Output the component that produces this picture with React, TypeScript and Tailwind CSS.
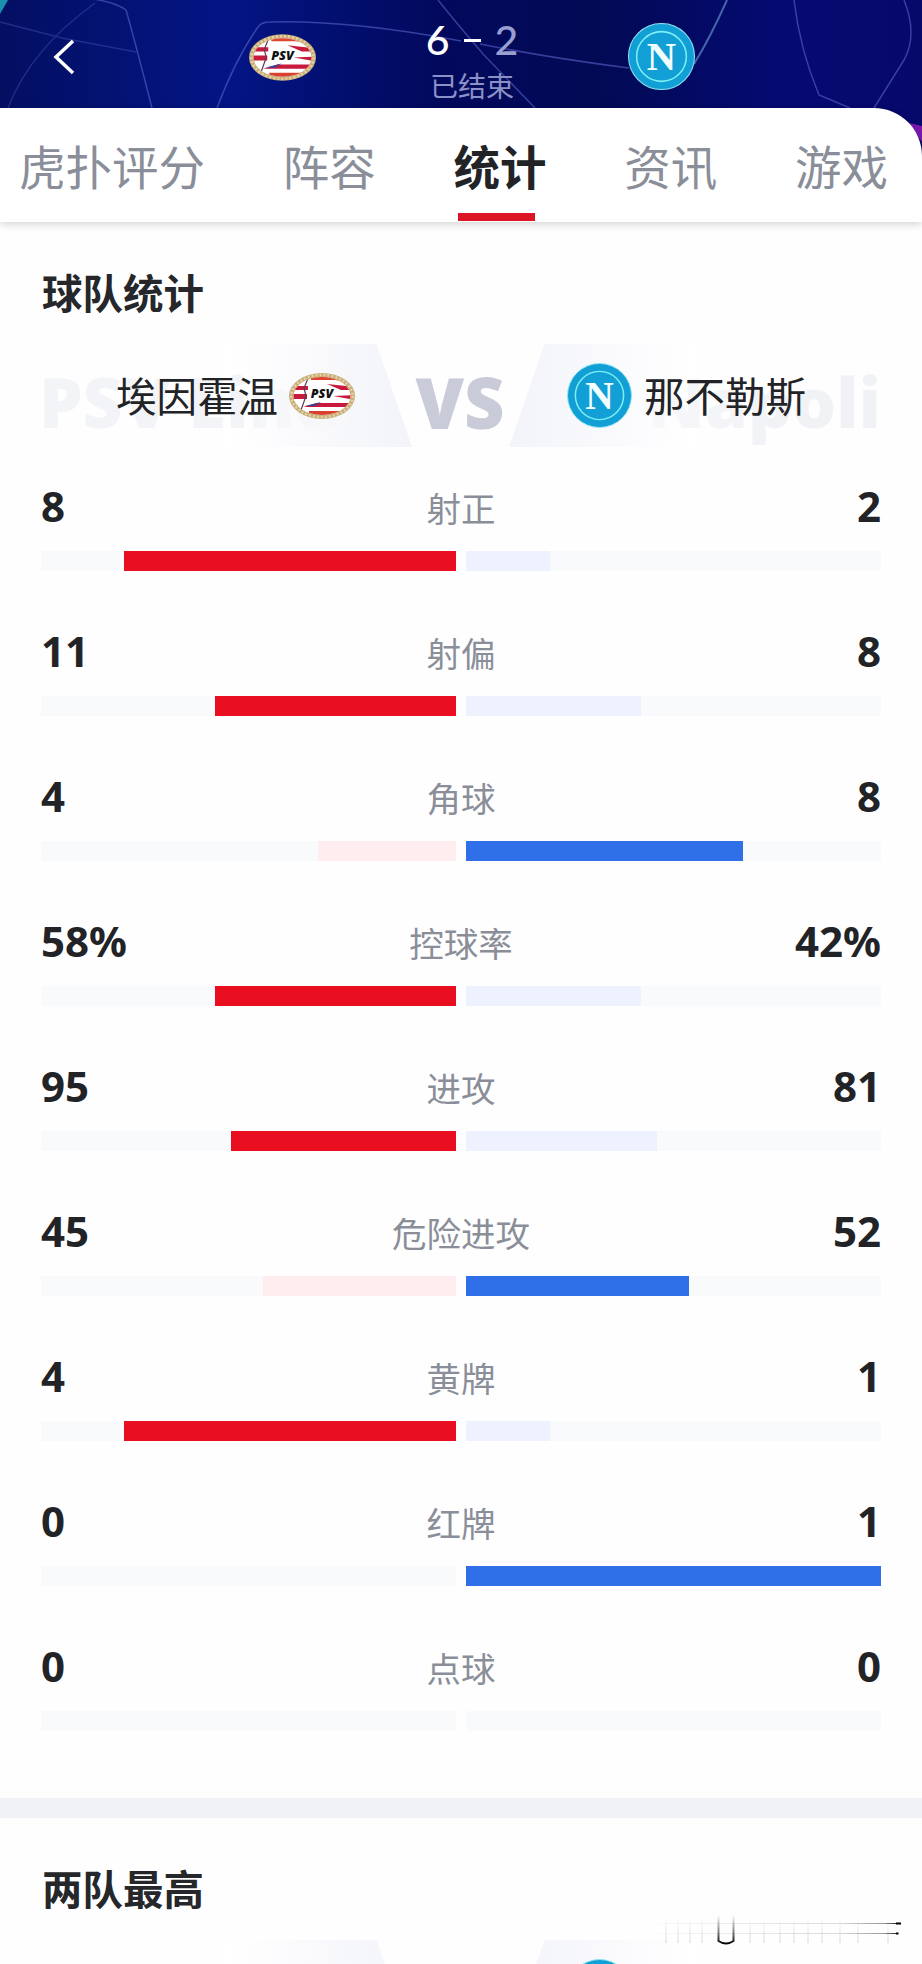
import type { ReactNode } from "react";

const cjk = "font-['Noto_Sans_CJK_SC',sans-serif]";

const tabs = ["虎扑评分", "阵容", "统计", "资讯", "游戏"];

const stats = [
  { label: "射正", home: "8", away: "2", homePct: 80, awayPct: 20.3 },
  { label: "射偏", home: "11", away: "8", homePct: 58, awayPct: 42.2 },
  { label: "角球", home: "4", away: "8", homePct: 33.3, awayPct: 66.7 },
  { label: "控球率", home: "58%", away: "42%", homePct: 58, awayPct: 42.2 },
  { label: "进攻", home: "95", away: "81", homePct: 54.3, awayPct: 46 },
  { label: "危险进攻", home: "45", away: "52", homePct: 46.6, awayPct: 53.8 },
  { label: "黄牌", home: "4", away: "1", homePct: 80, awayPct: 20.3 },
  { label: "红牌", home: "0", away: "1", homePct: 0, awayPct: 100 },
  { label: "点球", home: "0", away: "0", homePct: 0, awayPct: 0 },
];

function PsvLogo({ className }: { className?: string }) {
  return (
    <svg viewBox="0 0 66 46" className={className}>
      <defs>
        <clipPath id="psv-inner">
          <ellipse cx="33" cy="23" rx="28.5" ry="19" />
        </clipPath>
      </defs>
      <ellipse cx="33" cy="23" rx="33" ry="23" fill="#c9ad78" />
      <ellipse
        cx="33"
        cy="23"
        rx="30.7"
        ry="21"
        fill="none"
        stroke="#e3d3a8"
        strokeWidth="2.5"
        strokeDasharray="2 2"
      />
      <g clipPath="url(#psv-inner)">
        <rect width="66" height="46" fill="#fff" />
        <path d="M22 0h44v10L46 7H22z" fill="#e0452f" />
        <path d="M0 13h19v4H0zM0 21h18v5H0zM38 11l28 3v3H52z" fill="#c81a3c" />
        <path d="M66 27L44 23l22-1zM28 30h38v4H14z" fill="#c81a3c" />
        <path d="M20 38h36v8H20z" fill="#d9402f" />
        <path d="M20 3l-5 12 2 8-5 14" stroke="#5d3c55" strokeWidth="1.2" fill="none" />
        <path d="M16 33l16-4-6 4z" fill="#3b3f8f" />
      </g>
      <text
        x="33"
        y="25"
        textAnchor="middle"
        fontSize="12.5"
        fontWeight="800"
        fontStyle="italic"
        fontFamily="'Open Sans', sans-serif"
        fill="#111"
      >
        PSV
      </text>
    </svg>
  );
}

function NapoliLogo({ className }: { className?: string }) {
  return (
    <svg viewBox="0 0 66 66" className={className}>
      <circle cx="33" cy="33" r="32.5" fill="#119fd6" stroke="#8fe6f4" strokeWidth="1" />
      <circle cx="33" cy="33" r="24.5" fill="none" stroke="#7df0f5" strokeWidth="1.5" />
      <text
        x="33"
        y="46.5"
        textAnchor="middle"
        fontSize="40"
        fontWeight="700"
        fontFamily="'Liberation Serif', serif"
        fill="#f2ffff"
      >
        N
      </text>
    </svg>
  );
}

function Header() {
  return (
    <header className="relative h-[160px] overflow-hidden bg-[linear-gradient(90deg,#040f62_0%,#031585_25%,#02095c_48%,#020a55_65%,#050a72_85%,#07086a_100%)]">
      <svg
        viewBox="0 0 922 160"
        className="absolute inset-0 h-full w-full"
        fill="none"
        stroke="#5a63c8"
        strokeOpacity="0.6"
        strokeWidth="1.5"
      >
        <path d="M0 0h8L0 14z" fill="#1a8fae" stroke="none" />
        <path d="M60-4Q110-2 126 10Q132 30 152 108" />
        <path d="M95 3Q30 50 8 108M0 22L62 38 136 52" strokeOpacity="0.35" />
        <path d="M217 108Q235 60 258 27Q261 22 270 22Q350 20 461 41" />
        <path d="M438 0Q458 25 484 55L535 108M480 44Q550 58 629 68" />
        <path d="M694 64Q710 38 727 0" stroke="#6fa0d8" strokeWidth="2" />
        <path d="M794 0Q800 50 819 95L850 108M904 0Q918 35 904 60L874 108" />
        <path d="M905 122L922 126V142Z" fill="#7a18b0" stroke="none" />
      </svg>

      <div className="relative flex h-[108px] items-center">
        <button className="ml-[53px] mt-[5px]" aria-label="返回">
          <svg
            width="22"
            height="36"
            viewBox="0 0 22 36"
            fill="none"
            stroke="#fff"
            strokeWidth="3.5"
          >
            <path d="M20 2L3 18l17 16" />
          </svg>
        </button>
        <PsvLogo className="ml-[174px] mt-[6px] h-[47px] w-[67px]" />
        <div className="flex w-[312px] flex-col items-center pt-[9px]">
          <div className="flex h-[50px] items-center gap-[14px] pt-[2px] font-['Lato',sans-serif] text-[41px] leading-none font-medium text-white">
            <span>6</span>
            <span className="mt-[2px] h-[3px] w-[17px] bg-white" />
            <span className="text-[#9a9fd2]">2</span>
          </div>
          <span className={`${cjk} mt-[2px] h-[38px] text-[28px] leading-[38px] text-[#8b90c6]`}>
            已结束
          </span>
        </div>
        <NapoliLogo className="mt-[5px] size-[67px]" />
      </div>
    </header>
  );
}

function TabBar() {
  return (
    <nav
      className={`${cjk} relative -mt-[52px] flex h-[114px] items-start justify-between rounded-tr-[48px] bg-white pr-[34px] pl-[19px] text-[46.5px] leading-[68px] text-[#8a8e99] shadow-[0_2px_8px_rgba(0,0,0,0.18)]`}
    >
      {tabs.map((tab) =>
        tab === "统计" ? (
          <div key={tab} className="flex h-full flex-col items-center pt-[23px] font-bold text-[#222326]">
            {tab}
            <span className="mt-auto mr-[8px] mb-px h-[8px] w-[77px] bg-[#dc1625]" />
          </div>
        ) : (
          <div key={tab} className="pt-[23px]">
            {tab}
          </div>
        )
      )}
    </nav>
  );
}

function SectionTitle({ children }: { children: ReactNode }) {
  return (
    <h2 className={`${cjk} pl-px text-[40.5px] leading-[58px] font-bold text-[#26272a]`}>
      {children}
    </h2>
  );
}

function TeamsBanner() {
  return (
    <div className="relative h-[103px] font-['Noto_Sans',sans-serif]">
      {/* slanted panels and english names behind the team names */}
      <div className="absolute top-0 left-[184px] h-full w-[187px] bg-linear-to-r from-white to-[#f3f4fa] [clip-path:polygon(0_0,81%_0,100%_100%,0_100%)]" />
      <div className="absolute top-0 left-[468px] h-full w-[187px] bg-linear-to-l from-white to-[#f3f4fa] [clip-path:polygon(19%_0,100%_0,100%_100%,0_100%)]" />
      <span className="absolute top-[11px] left-[-2px] w-[340px] overflow-hidden bg-linear-to-r from-[#f3f4f7] from-60% to-transparent to-95% bg-clip-text text-[69px] leading-[92px] font-black whitespace-nowrap text-transparent">
        PSV Eindhoven
      </span>
      <span className="absolute top-[11px] right-0 bg-linear-to-l from-[#f1f2f6] from-40% to-[#f8f8fb] bg-clip-text text-[69px] leading-[92px] font-black text-transparent">
        Napoli
      </span>

      <div className={`${cjk} relative flex h-full items-center text-[40.5px] text-[#222326]`}>
        <span className="ml-[75px]">埃因霍温</span>
        <PsvLogo className="ml-[11px] h-[46px] w-[66px]" />
        <span className="ml-[58px] flex w-[94px] justify-center pt-[13px] font-['Noto_Sans',sans-serif] text-[70px] leading-[90px] font-black text-[#c9cbd8]">
          VS
        </span>
        <NapoliLogo className="ml-[60px] size-[65px]" />
        <span className="ml-[12px]">那不勒斯</span>
      </div>
    </div>
  );
}

function StatRow({ stat }: { stat: (typeof stats)[number] }) {
  const homeLeads = stat.homePct > stat.awayPct;

  return (
    <li className="h-[145px]">
      <div className="flex h-[79px] items-center justify-between font-['Noto_Sans',sans-serif] text-[42px] font-bold text-[#222326]">
        <span className="flex-1">{stat.home}</span>
        <span className={`${cjk} pt-[4px] text-[34.5px] font-normal text-[#8a8e99]`}>
          {stat.label}
        </span>
        <span className="flex-1 text-right">{stat.away}</span>
      </div>
      <div className="mt-[6px] flex gap-[10px]">
        <div className="flex h-[20px] flex-1 justify-end bg-[#f9fafc]">
          <div
            className={homeLeads ? "bg-[#ea0f20]" : "bg-[#ffedef]"}
            style={{ width: `${stat.homePct}%` }}
          />
        </div>
        <div className="h-[20px] flex-1 bg-[#f9fafc]">
          <div
            className={homeLeads ? "h-full bg-[#edf2fe]" : "h-full bg-[#2f70e9]"}
            style={{ width: `${stat.awayPct}%` }}
          />
        </div>
      </div>
    </li>
  );
}

// faded strokes left of the corner mark
function CornerMark() {
  return (
    <svg
      viewBox="0 0 270 34"
      className="absolute top-[1911px] left-[646px] h-[34px] w-[270px]"
      fill="none"
    >
      <defs>
        <linearGradient id="mark-x" gradientUnits="userSpaceOnUse" x1="10" x2="255" y1="0" y2="0">
          <stop offset="0" stopColor="#000" stopOpacity="0.02" />
          <stop offset="0.75" stopColor="#000" stopOpacity="0.14" />
          <stop offset="0.93" stopColor="#000" stopOpacity="0.4" />
          <stop offset="1" stopColor="#000" />
        </linearGradient>
        <linearGradient id="mark-y" gradientUnits="userSpaceOnUse" x1="0" x2="0" y1="4" y2="33">
          <stop offset="0" stopColor="#000" stopOpacity="0" />
          <stop offset="0.6" stopColor="#000" stopOpacity="0.5" />
          <stop offset="1" stopColor="#000" />
        </linearGradient>
        <linearGradient id="mark-haze" gradientUnits="userSpaceOnUse" x1="0" x2="0" y1="6" y2="32">
          <stop offset="0" stopColor="#000" stopOpacity="0" />
          <stop offset="1" stopColor="#000" stopOpacity="0.08" />
        </linearGradient>
      </defs>
      <path d="M12 12.5h243M12 22.500h240" stroke="url(#mark-x)" strokeWidth="1" />
      <path d="M72.500 4v26q7.500 5 15 0V4" stroke="url(#mark-y)" strokeWidth="2" />
      <path
        d="M20 6v26M32 6v26M44 6v26M56 6v26M104 6v26M118 6v26M134 6v26M148 6v26M162 6v26M176 6v26M194 6v26M212 6v26M242 6v26"
        stroke="url(#mark-haze)"
        strokeWidth="2"
      />
      <path d="M250 12.500h5M250 22.500h2.500" stroke="#000" strokeWidth="2" />
    </svg>
  );
}

export default function App() {
  return (
    <div className="relative h-[1964px] w-[922px] overflow-hidden bg-[#fefefe]">
      <Header />
      <TabBar />

      <section className="px-[41px] pt-[41px]">
        <SectionTitle>球队统计</SectionTitle>
        <div className="mt-[23px]">
          <TeamsBanner />
        </div>
        <ul className="mt-[19px]">
          {stats.map((stat) => (
            <StatRow key={stat.label} stat={stat} />
          ))}
        </ul>
      </section>

      <div className="mt-[27px] h-[20px] bg-[#f1f2f5]" />

      <section className="px-[41px] pt-[41px]">
        <SectionTitle>两队最高</SectionTitle>
        <div className="mt-[23px]">
          <TeamsBanner />
        </div>
      </section>

      <CornerMark />
    </div>
  );
}
